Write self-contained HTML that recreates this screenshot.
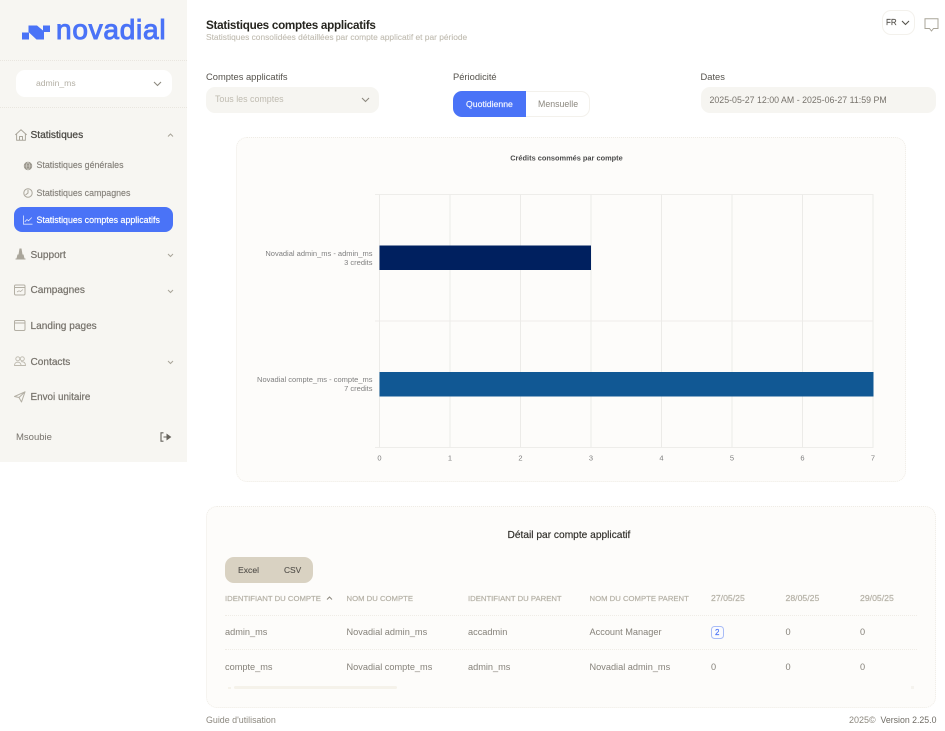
<!DOCTYPE html>
<html lang="fr">
<head>
<meta charset="utf-8">
<title>Statistiques comptes applicatifs</title>
<style>
html,body{margin:0;padding:0;background:#fff}
body{width:945px;height:731px;position:relative;overflow:hidden;font-family:"Liberation Sans",Arial,sans-serif;color:#77736c;filter:blur(.35px)}
.t{position:absolute;white-space:nowrap;line-height:1}
.b{position:absolute;box-sizing:border-box}
svg{position:absolute;overflow:visible}
.ic{fill:none;stroke:#aaa69b;stroke-width:1;stroke-linecap:round;stroke-linejoin:round}
.nav{font-size:10.1px;color:#75716a;-webkit-text-stroke:.2px #75716a}
.sub{font-size:8.85px;color:#85817a;-webkit-text-stroke:.15px #85817a}
.th{font-size:7.72px;color:#b5b1a6;-webkit-text-stroke:.2px #b5b1a6}
.td{font-size:9.2px;color:#86827a}
.lab{font-size:9.35px;color:#55524c}
.ax{font-family:"Liberation Sans",Arial,sans-serif;font-size:7.5px;fill:#7f7f7f}
</style>
</head>
<body>
<!-- sidebar -->
<div class="b" style="left:0;top:0;width:187px;height:462px;background:#f7f6f2"></div>
<div class="b" style="left:0;top:60px;width:187px;border-top:1px dotted #e9e6df"></div>
<div class="b" style="left:0;top:107px;width:187px;border-top:1px dotted #e9e6df"></div>
<svg style="left:0;top:0" width="60" height="50"><polygon fill="#4a73f7" points="22,32.5 29,32.5 29,39.5 22,39.5"/><polygon fill="#4a73f7" points="28.5,25.5 37,25.5 43,30.5 43,25.5 50,25.5 50,32 44,32 44,39.5 36.5,39.5 28.5,32"/></svg>
<div class="t" style="left:56px;top:15.8px;font-size:28px;color:#4a73f7;letter-spacing:.75px;-webkit-text-stroke:1px #4a73f7">novadial</div>
<div class="b" style="left:16px;top:70px;width:156px;height:27px;background:#fff;border-radius:9px"></div>
<div class="t" style="left:36px;top:79px;font-size:8.6px;color:#b3afa4">admin_ms</div>
<svg style="left:153px;top:81px" width="9" height="6"><path d="M1 1l3.5 3.5L8 1" fill="none" stroke="#8d897f" stroke-width="1.1"/></svg>

<svg class="ic" style="left:15px;top:129px" width="12" height="12" viewBox="0 0 12 12"><path d="M.6 5.6 6 .8l5.4 4.8M1.6 4.8V11.3H10.4V4.8M4.5 11.3V7.5H7.5V11.3"/></svg>
<div class="t nav" style="left:30.5px;top:130.6px;font-size:10.2px;color:#4a4843;-webkit-text-stroke:.25px #4a4843">Statistiques</div>
<svg style="left:167px;top:133px" width="7" height="5"><path d="M1 3.5 3.5 1 6 3.5" fill="none" stroke="#a9a599" stroke-width="1"/></svg>

<svg style="left:23px;top:160.5px" width="10" height="10" viewBox="0 0 10 10"><circle cx="5" cy="5" r="4.2" fill="#9a968c"/><path d="M1 5H9M5 1C2.8 3.5 2.8 6.5 5 9M5 1C7.2 3.5 7.2 6.5 5 9" stroke="#d5d2ca" stroke-width=".6" fill="none"/></svg>
<div class="t sub" style="left:36.5px;top:160.5px">Statistiques générales</div>
<svg class="ic" style="left:23px;top:188px" width="10" height="10" viewBox="0 0 10 10"><circle cx="5" cy="5" r="4.2"/><path d="M5 2.2V5L2.8 6.8"/></svg>
<div class="t sub" style="left:36.5px;top:188.5px">Statistiques campagnes</div>

<div class="b" style="left:14px;top:207px;width:159px;height:25px;background:#4a73f7;border-radius:8px"></div>
<svg style="left:23px;top:215px" width="10" height="10" viewBox="0 0 10 10"><path d="M.5 .5V9.2H9.5M1.8 6.8 4 4.5 5.5 5.8 8.8 2.5" fill="none" stroke="#dfe6fe" stroke-width=".8"/></svg>
<div class="t sub" style="left:36.5px;top:215.5px;color:#fff;-webkit-text-stroke:.2px #fff">Statistiques comptes applicatifs</div>

<svg style="left:15px;top:248px" width="11" height="12" viewBox="0 0 11 12"><path d="M4.5 .5H6.5L7.5 6.5H8.5L9.5 10.5H1.5L2.5 6.5H3.5Z" fill="#aaa69b"/><path d="M.5 11H10.5" stroke="#aaa69b" stroke-width="1"/></svg>
<div class="t nav" style="left:30.5px;top:250.6px">Support</div>
<svg style="left:167px;top:253px" width="7" height="5"><path d="M1 1 3.5 3.5 6 1" fill="none" stroke="#a9a599" stroke-width="1"/></svg>

<svg style="left:14px;top:284px" width="12" height="12" viewBox="0 0 12 12"><rect x=".5" y="1" width="10.5" height="10" rx="1.2" fill="none" stroke="#b3afa4"/><path d="M.5 3.5H11" stroke="#b3afa4"/><path d="M3 8 5 6.8 6.5 7.5 9 5.5" stroke="#b3afa4" fill="none" stroke-width=".8"/></svg>
<div class="t nav" style="left:30.5px;top:285.5px">Campagnes</div>
<svg style="left:167px;top:288.5px" width="7" height="5"><path d="M1 1 3.5 3.5 6 1" fill="none" stroke="#a9a599" stroke-width="1"/></svg>

<svg style="left:14px;top:320px" width="12" height="12" viewBox="0 0 12 12"><rect x=".5" y=".5" width="10.5" height="10" rx="1.2" fill="none" stroke="#b3afa4"/><path d="M.5 3H11" stroke="#b3afa4"/></svg>
<div class="t nav" style="left:30.5px;top:321.5px">Landing pages</div>

<svg style="left:14px;top:356px" width="12" height="11" viewBox="0 0 12 11"><g fill="none" stroke="#bdb9ae" stroke-width=".9"><circle cx="3.8" cy="2.8" r="2"/><circle cx="8.3" cy="2.8" r="2"/><path d="M.5 9.5C.5 5 7 5 7 9.5ZM7 5.7C10 5.3 11.5 7 11.5 9.5H7"/></g></svg>
<div class="t nav" style="left:30.5px;top:357.6px">Contacts</div>
<svg style="left:167px;top:360px" width="7" height="5"><path d="M1 1 3.5 3.5 6 1" fill="none" stroke="#a9a599" stroke-width="1"/></svg>

<svg class="ic" style="left:14px;top:391px;stroke:#b3afa4" width="12" height="12" viewBox="0 0 12 12"><path d="M.5 5.5 11 .8 7.5 11 5 6.5ZM5 6.5 11 .8"/></svg>
<div class="t nav" style="left:30.5px;top:392.5px;font-size:9.9px">Envoi unitaire</div>

<div class="t" style="left:16px;top:432.5px;font-size:9.5px;color:#77736c">Msoubie</div>
<svg style="left:160px;top:432px" width="11" height="10" viewBox="0 0 11 10"><path d="M3.5 .8H1V9.2H3.5" fill="none" stroke="#66635c" stroke-width="1.1"/><path d="M3.5 5H7V2.5L10.5 5 7 7.5V5Z" fill="#66635c" stroke="#66635c" stroke-width="1"/></svg>

<!-- header -->
<div class="t" style="left:206px;top:19.5px;font-size:11.7px;letter-spacing:-.28px;font-weight:bold;color:#26251f">Statistiques comptes applicatifs</div>
<div class="t" style="left:206px;top:33px;font-size:8.4px;color:#c0bcb1;-webkit-text-stroke:.1px #c0bcb1">Statistiques consolidées détaillées par compte applicatif et par période</div>
<div class="b" style="left:882px;top:10px;width:33px;height:25px;border:1px solid #f3f1ec;border-radius:9px;background:#fff"></div>
<div class="t" style="left:886px;top:18.5px;font-size:8px;color:#55524c;-webkit-text-stroke:.15px #55524c">FR</div>
<svg style="left:901px;top:20px" width="9" height="6"><path d="M1 1 4.5 4.5 8 1" fill="none" stroke="#55524c" stroke-width="1.1"/></svg>
<svg style="left:923.5px;top:18px" width="15" height="15" viewBox="0 0 15 15"><path d="M1 .8H14V10.5H9.5L7.5 13 5.5 10.5H1Z" fill="none" stroke="#a9a599" stroke-width="1"/></svg>

<!-- filters -->
<div class="t lab" style="left:206px;top:72.5px">Comptes applicatifs</div>
<div class="b" style="left:206px;top:87px;width:173px;height:26px;background:#f6f5f1;border-radius:9px"></div>
<div class="t" style="left:215px;top:95px;font-size:8.9px;color:#bfbbb0">Tous les comptes</div>
<svg style="left:361px;top:97px" width="9" height="6"><path d="M1 1 4.5 4.5 8 1" fill="none" stroke="#8d897f" stroke-width="1.1"/></svg>

<div class="t lab" style="left:453px;top:72.5px">Périodicité</div>
<div class="b" style="left:453px;top:91px;width:137px;height:26px;background:#fff;border:1px solid #f3f1ec;border-radius:9px"></div>
<div class="b" style="left:453px;top:91px;width:73px;height:26px;background:#4a73f7;border-radius:9px 0 0 9px"></div>
<div class="t" style="left:466px;top:100px;font-size:8.7px;color:#f2f5ff;-webkit-text-stroke:.15px #fff">Quotidienne</div>
<div class="t" style="left:538px;top:100px;font-size:8.8px;color:#8c887f">Mensuelle</div>

<div class="t lab" style="left:700.5px;top:72.5px">Dates</div>
<div class="b" style="left:701px;top:87px;width:235px;height:26px;background:#f6f5f1;border-radius:9px"></div>
<div class="t" style="left:709.5px;top:95.5px;font-size:8.82px;color:#77736c">2025-05-27 12:00 AM - 2025-06-27 11:59 PM</div>

<!-- chart card -->
<div class="b" style="left:236px;top:137px;width:670px;height:345px;background:#fdfcfa;border:1px dotted #efece6;border-radius:11px"></div>
<svg style="left:0;top:0" width="945" height="731">
<text x="566.5" y="160.5" text-anchor="middle" font-family="Liberation Sans,Arial,sans-serif" font-size="7.4" font-weight="bold" fill="#4c4c4c">Crédits consommés par compte</text>
<g stroke="#ecebe8" stroke-width="1" fill="none">
<path d="M375 194.5H873.5M375 321H873.5M375 447.5H873.5" stroke="#eeedea"/>
<path d="M379.5 194.5V447.5M450 194.5V447.5M520.5 194.5V447.5M591 194.5V447.5M661.5 194.5V447.5M732 194.5V447.5M802.5 194.5V447.5M873 194.5V447.5"/>
</g>
<rect x="379.5" y="245.5" width="211.5" height="24.5" fill="#00205f"/>
<rect x="379.5" y="372" width="494" height="24.5" fill="#115894"/>
<g class="ax" text-anchor="end">
<text x="372.5" y="256">Novadial admin_ms - admin_ms</text>
<text x="372.5" y="265">3 credits</text>
<text x="372.5" y="382">Novadial compte_ms - compte_ms</text>
<text x="372.5" y="391">7 credits</text>
</g>
<g class="ax" text-anchor="middle">
<text x="379.5" y="460.5">0</text><text x="450" y="460.5">1</text><text x="520.5" y="460.5">2</text><text x="591" y="460.5">3</text><text x="661.5" y="460.5">4</text><text x="732" y="460.5">5</text><text x="802.5" y="460.5">6</text><text x="873" y="460.5">7</text>
</g>
</svg>

<!-- table card -->
<div class="b" style="left:206px;top:506px;width:730px;height:202px;background:#fdfcfa;border:1px dotted #efece6;border-radius:11px"></div>
<div class="t" style="left:507.5px;top:530.6px;font-size:10.2px;color:#2e2c27;-webkit-text-stroke:.15px #2e2c27">Détail par compte applicatif</div>
<div class="b" style="left:225px;top:557px;width:88px;height:26px;background:#d9d2c2;border-radius:9px"></div>
<div class="t" style="left:238px;top:565.5px;font-size:8.6px;color:#55524c;-webkit-text-stroke:.12px #55524c">Excel</div>
<div class="t" style="left:284px;top:565.5px;font-size:8.4px;color:#55524c;-webkit-text-stroke:.12px #55524c">CSV</div>

<div class="t th" style="left:225px;top:594.5px">IDENTIFIANT DU COMPTE</div>
<svg style="left:326px;top:596px" width="7" height="5"><path d="M1 3.5 3.5 1 6 3.5" fill="none" stroke="#8d897f" stroke-width="1"/></svg>
<div class="t th" style="left:346.5px;top:594.5px">NOM DU COMPTE</div>
<div class="t th" style="left:468px;top:594.5px">IDENTIFIANT DU PARENT</div>
<div class="t th" style="left:589.5px;top:594.5px">NOM DU COMPTE PARENT</div>
<div class="t th" style="left:711px;top:594px;font-size:8.7px">27/05/25</div>
<div class="t th" style="left:785.5px;top:594px;font-size:8.7px">28/05/25</div>
<div class="t th" style="left:860px;top:594px;font-size:8.7px">29/05/25</div>

<div class="b" style="left:225px;top:615px;width:692px;border-top:1px dotted #efece6"></div>
<div class="b" style="left:225px;top:649px;width:692px;border-top:1px dotted #efece6"></div>

<div class="t td" style="left:225px;top:627.5px">admin_ms</div>
<div class="t td" style="left:346.5px;top:627.5px">Novadial admin_ms</div>
<div class="t td" style="left:468px;top:627.5px">accadmin</div>
<div class="t td" style="left:589.5px;top:627.5px">Account Manager</div>
<div class="b" style="left:711px;top:626px;width:13px;height:13px;border:1px solid #a9bcf6;border-radius:3.5px;background:#fbfbfd"></div>
<div class="t" style="left:715px;top:629px;font-size:8px;color:#4a73f7;-webkit-text-stroke:.15px #4a73f7">2</div>
<div class="t td" style="left:785.5px;top:627.5px">0</div>
<div class="t td" style="left:860px;top:627.5px">0</div>

<div class="t td" style="left:225px;top:662.5px">compte_ms</div>
<div class="t td" style="left:346.5px;top:662.5px">Novadial compte_ms</div>
<div class="t td" style="left:468px;top:662.5px">admin_ms</div>
<div class="t td" style="left:589.5px;top:662.5px">Novadial admin_ms</div>
<div class="t td" style="left:711px;top:662.5px">0</div>
<div class="t td" style="left:785.5px;top:662.5px">0</div>
<div class="t td" style="left:860px;top:662.5px">0</div>

<div class="b" style="left:234px;top:686px;width:163px;height:3px;background:#f5f2ea;border-radius:2px"></div>
<div class="b" style="left:228px;top:686.5px;width:3px;height:2px;background:#f5f2ea"></div>
<div class="b" style="left:911px;top:686px;width:3px;height:3px;background:#f5f3ee"></div>

<!-- footer -->
<div class="t" style="left:206px;top:715.5px;font-size:8.9px;color:#8c887f">Guide d'utilisation</div>
<div class="t" style="left:849px;top:715.5px;font-size:9px;color:#8c887f">2025©</div>
<div class="t" style="left:880.5px;top:715.5px;font-size:8.75px;color:#6f6c65">Version 2.25.0</div>
</body>
</html>
